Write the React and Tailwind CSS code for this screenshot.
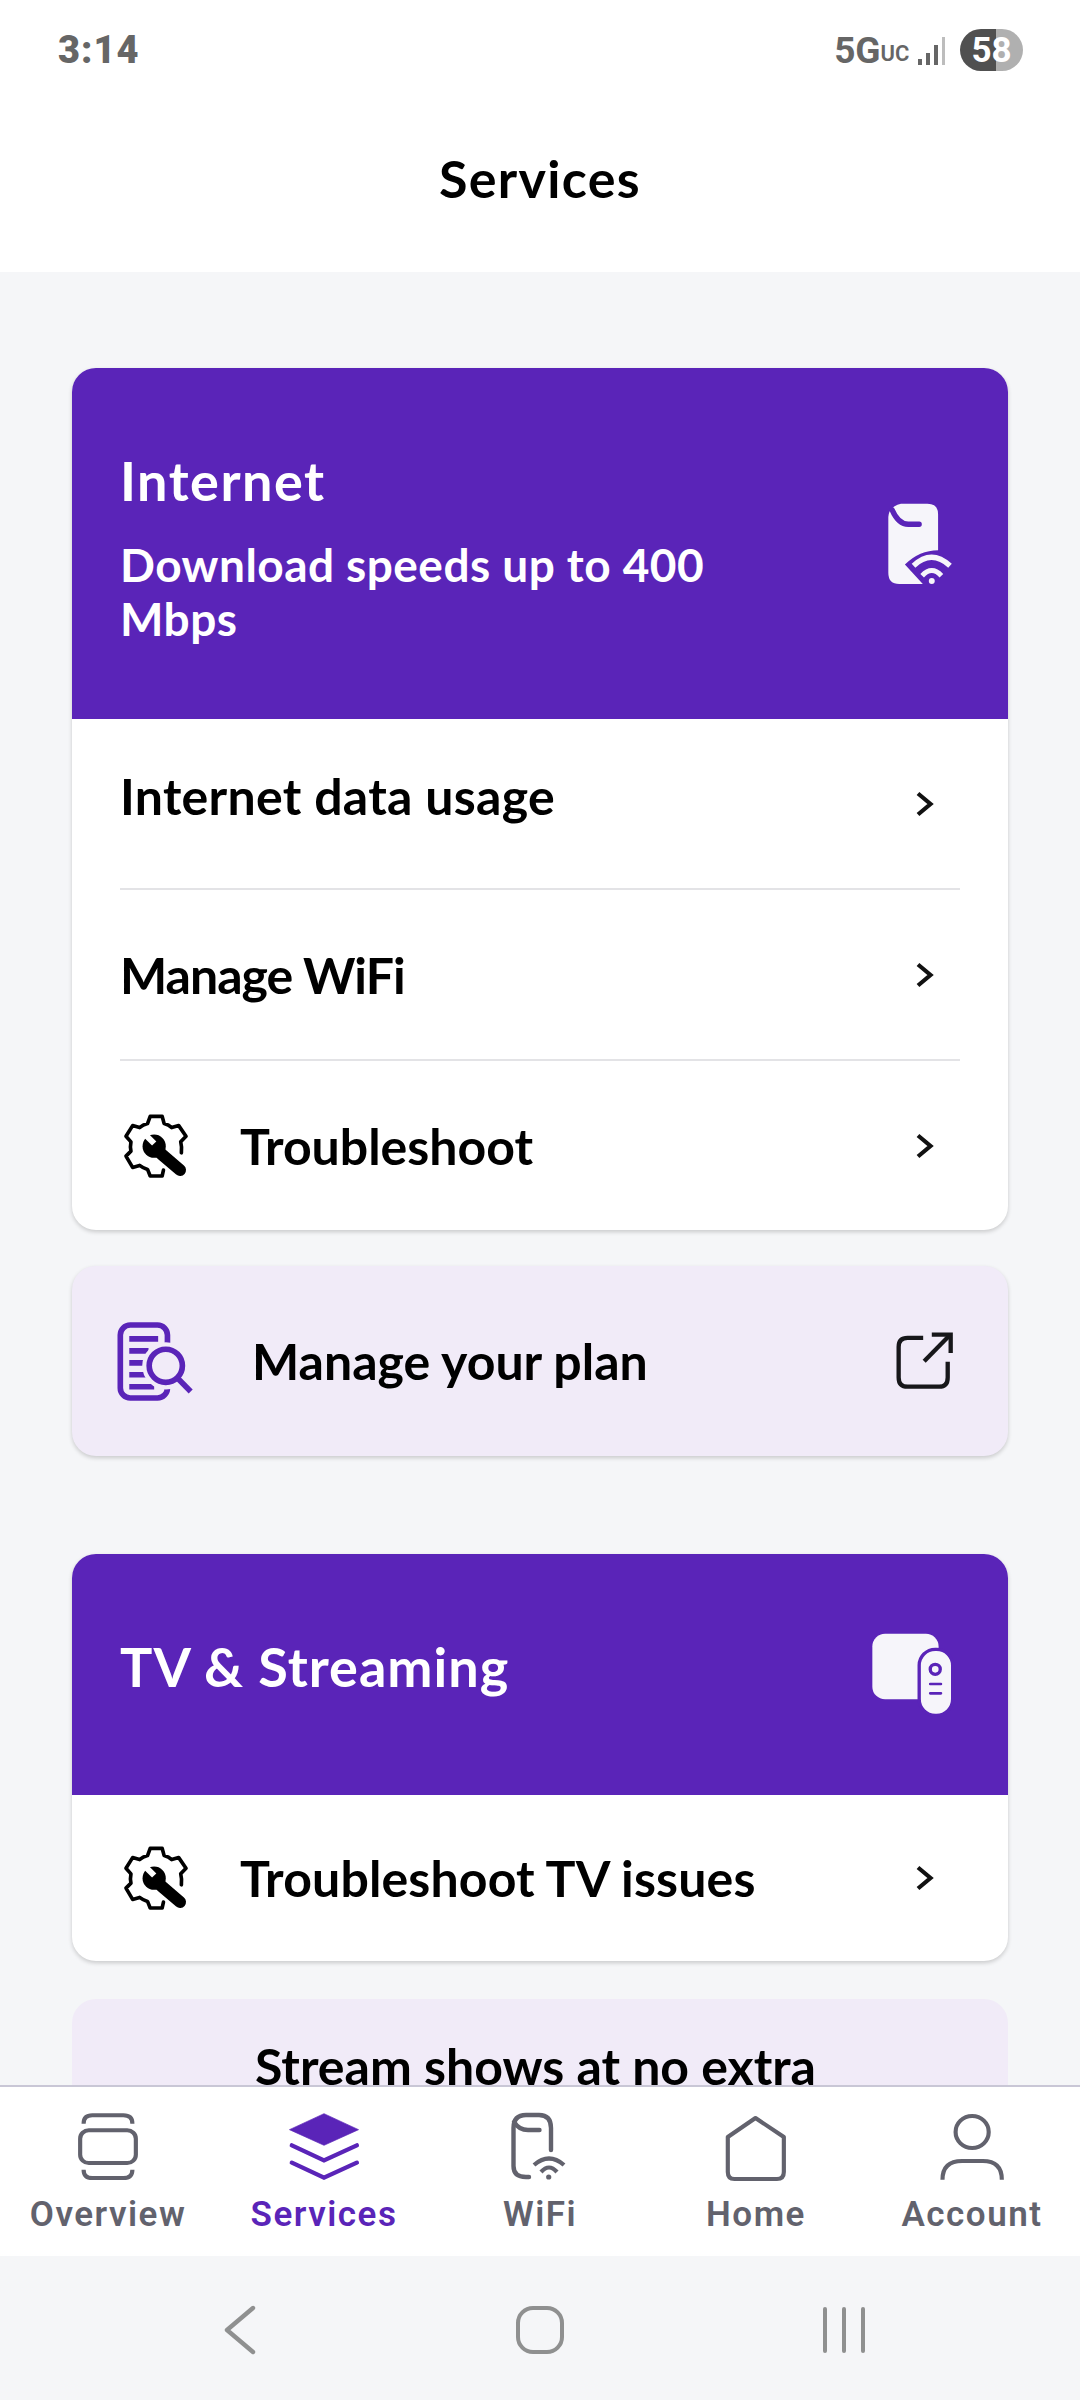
const purple = "#5a24b8";
const navGray = "#62626d";

function Svg({ vb, w, h, children, className = "" }) {
  return (
    <svg viewBox={vb} width={w} height={h} preserveAspectRatio="none" fill="none" className={`block shrink-0 ${className}`}>
      {children}
    </svg>
  );
}

function Chevron() {
  return (
    <svg viewBox="0 0 20 26" width="20" height="26" fill="none" className="block shrink-0">
      <path d="M3 2.5 L15.5 13 L3 23.5" stroke="#111" strokeWidth="4.2" strokeLinecap="butt" strokeLinejoin="miter" />
    </svg>
  );
}

function GearWrench() {
  return (
    <Svg vb="95 65 205 205" w={68} h={68} className="ml-[2px]">
      <path
        d="M274 188 Q276 170 272 155 L288 138 L266 106 L245 112 Q236 104 222 100 L216 78 H180 L172 100 Q158 104 148 112 L127 106 L107 138 L122 155 Q119 170 122 183 L107 198 L127 232 L148 226 Q158 234 172 238 L180 258 H216 L220 240"
        stroke="#000" strokeWidth="11" strokeLinejoin="round" strokeLinecap="round"
      />
      <circle cx="192" cy="168" r="35" fill="#000" />
      <path d="M214 192 L270 240" stroke="#000" strokeWidth="36" strokeLinecap="round" />
      <path d="M162 130 L192 160" stroke="#fff" strokeWidth="18" />
    </Svg>
  );
}

function Row({ label, gear, h, divider, labelClass = "" }) {
  return (
    <div className={`${h} flex items-center ${divider ? "border-b-2 border-[#e3e3e6]" : ""}`}>
      {gear && (
        <div className="w-[120px] shrink-0">
          <GearWrench />
        </div>
      )}
      <span className={`flex-1 text-[50px] font-bold text-black leading-none ${labelClass}`}>{label}</span>
      <div className="mr-[25px]">
        <Chevron />
      </div>
    </div>
  );
}

export default function App() {
  return (
    <div
      className="w-[1080px] h-[2400px] flex flex-col overflow-hidden bg-[#f5f6f8]"
      style={{ fontFamily: '"Lato", "Noto Sans", sans-serif' }}
    >
      {/* status + title */}
      <header className="h-[272px] shrink-0 bg-white relative flex flex-col">
        <div className="h-[100px] pl-[58px] pr-[57px] pt-[29px] flex items-start justify-between" style={{ fontFamily: "Roboto, sans-serif" }}>
          <span className="text-[38px] font-black text-[#666] leading-[42px] tracking-[1px]">3:14</span>
          <div className="flex items-center h-[42px]">
            <span className="text-[37px] font-bold text-[#666] leading-none">5G</span>
            <span className="text-[22px] font-semibold text-[#666] leading-none self-end mb-[6px]">UC</span>
            <div className="ml-[9px] mr-[15px] flex items-end gap-[3.7px] h-[28px] self-end mb-[6px]">
              <i className="block w-[4px] h-[6px] bg-[#666]" />
              <i className="block w-[4px] h-[12px] bg-[#666]" />
              <i className="block w-[4px] h-[20px] bg-[#666]" />
              <i className="block w-[3.5px] h-[28px] bg-[#bdbdbd]" />
            </div>
            <div className="relative w-[63px] h-[42px] rounded-full overflow-hidden flex">
              <div className="w-[36px] bg-[#505050]" />
              <div className="flex-1 bg-[#b0b0b0]" />
              <span className="absolute inset-0 flex items-center justify-center text-[35px] font-bold text-white leading-none">58</span>
            </div>
          </div>
        </div>
        <h1 className="text-center text-[52px] font-bold text-black leading-none mt-[52px] tracking-[1.3px]">Services</h1>
      </header>

      {/* scrolled content */}
      <main className="flex-1 min-h-0 overflow-hidden px-[72px] pt-[96px]">
        <section className="rounded-[24px] overflow-hidden bg-white shadow-[0_2px_4px_rgba(0,0,0,0.18)]">
          <div className="h-[351px] pl-[48px] pr-[54px] flex items-center justify-between" style={{ backgroundColor: purple }}>
            <div className="w-[640px] text-white font-bold pt-[9px]">
              <div className="text-[54px] leading-[60px] mb-[27px] tracking-[1.5px]">Internet</div>
              <div className="text-[46px] leading-[54px] tracking-[0.45px]">Download speeds up to 400 Mbps</div>
            </div>
            <Svg vb="195 95 205 250" w={68} h={83}>
              <path d="M240 100 H320 Q352 100 352 132 V240 Q296 240 252 283 L306 342 H235 Q202 342 202 308 V140 Q204 108 240 100 Z" fill="#f6f5fa" />
              <path d="M213 118 Q232 162 262 162 H295" stroke={purple} strokeWidth="16" strokeLinecap="round" />
              <path d="M278 287 Q332 236 388 287" stroke="#f6f5fa" strokeWidth="16" />
              <path d="M304 317 Q333 286 362 317" stroke="#f6f5fa" strokeWidth="15" />
              <circle cx="333" cy="333" r="9" fill="#f6f5fa" />
            </Svg>
          </div>
          <div className="px-[48px]">
            <Row label="Internet data usage" h="h-[171px]" divider labelClass="tracking-[0.3px] pb-[16px]" />
            <Row label="Manage WiFi" h="h-[171px]" divider labelClass="tracking-[-1px]" />
            <Row label="Troubleshoot" gear h="h-[169px]" />
          </div>
        </section>

        <section className="mt-[36px] h-[190px] rounded-[24px] bg-[#f1ebf8] shadow-[0_2px_4px_rgba(0,0,0,0.18)] pl-[44px] pr-[54px] flex items-center">
          <div className="w-[136px] shrink-0">
            <Svg vb="80 60 235 250" w={78} h={83}>
              <rect x="93" y="75" width="142" height="220" rx="30" stroke={purple} strokeWidth="17" />
              <path d="M120 117 H207 M120 153 H178 M120 189 H178 M120 225 H178 M120 261 H195" stroke={purple} strokeWidth="17" />
              <circle cx="230" cy="198" r="50" fill="#f1ebf8" stroke="#f1ebf8" strokeWidth="42" />
              <circle cx="230" cy="198" r="50" stroke={purple} strokeWidth="17" />
              <path d="M268 238 L305 275" stroke={purple} strokeWidth="17" />
            </Svg>
          </div>
          <span className="flex-1 text-[50px] font-bold text-black leading-none">Manage your plan</span>
          <Svg vb="110 95 175 175" w={58} h={58}>
            <path d="M192 113 H145 Q118 113 118 140 V232 Q118 260 145 260 H240 Q266 260 266 232 V185" stroke="#17171a" strokeWidth="13" />
            <path d="M195 183 L272 105" stroke="#17171a" strokeWidth="13" />
            <path d="M218 103 H275 V158" stroke="#17171a" strokeWidth="13" />
          </Svg>
        </section>

        <section className="mt-[98px] rounded-[24px] overflow-hidden bg-white shadow-[0_2px_4px_rgba(0,0,0,0.18)]">
          <div className="h-[241px] pl-[48px] pr-[53px] flex items-center justify-between" style={{ backgroundColor: purple }}>
            <div className="text-[54px] leading-[60px] font-bold text-white -mt-[15px] tracking-[1px]">TV &amp; Streaming</div>
            <Svg vb="60 70 260 255" w={87} h={85} className="-mr-[2px]">
              <rect x="67" y="75" width="198" height="197" rx="38" fill="#f6f5fa" />
              <rect x="207" y="122" width="100" height="198" rx="48" fill="#f6f5fa" stroke={purple} strokeWidth="10" />
              <circle cx="255" cy="182" r="15" stroke={purple} strokeWidth="10" />
              <path d="M240 226 H272 M240 254 H272" stroke={purple} strokeWidth="8" strokeLinecap="round" />
            </Svg>
          </div>
          <div className="px-[48px]">
            <Row label="Troubleshoot TV issues" gear h="h-[166px]" labelClass="tracking-[0.15px]" />
          </div>
        </section>

        <section className="mt-[38px] h-[200px] rounded-[24px] bg-[#f1ebf8] pt-[42px] pr-[9px] text-center">
          <span className="text-[50px] font-bold text-black leading-none">Stream shows at no extra</span>
        </section>
      </main>

      {/* bottom nav */}
      <nav
        className="h-[171px] shrink-0 bg-white border-t-[2px] border-[#c9c7d6] grid grid-cols-5 pt-[25px]"
        style={{ fontFamily: "Roboto, sans-serif" }}
      >
        <NavItem label="Overview">
          <Svg vb="225 125 185 210" w={64} h={70}>
            <rect x="237" y="180" width="161" height="98" rx="25" stroke={navGray} strokeWidth="12" />
            <path d="M247 160 Q247 135 272 135 H362 Q388 135 388 160" stroke={navGray} strokeWidth="12" />
            <path d="M247 298 Q247 323 272 323 H362 Q388 323 388 298" stroke={navGray} strokeWidth="12" />
          </Svg>
        </NavItem>
        <NavItem label="Services" active>
          <Svg vb="830 125 220 210" w={76} h={70}>
            <path d="M940 130 L1040 178 L940 225 L840 178 Z" fill={purple} strokeLinejoin="round" stroke={purple} strokeWidth="2" />
            <path d="M847 225 L940 270 L1035 225" stroke={purple} strokeWidth="13" strokeLinecap="round" />
            <path d="M847 277 L940 322 L1035 277" stroke={purple} strokeWidth="13" strokeLinecap="round" />
          </Svg>
        </NavItem>
        <NavItem label="WiFi">
          <Svg vb="510 2112 64 70" w={64} h={70}>
            <path d="M553 2150 V2128 Q553 2115 541 2115 H528 Q515.5 2115 515.5 2128 V2166 Q515.5 2177 528 2177 H531" stroke={navGray} strokeWidth="4.4" strokeLinecap="round" />
            <path d="M516 2122 Q521 2130 530 2130 H541.5" stroke={navGray} strokeWidth="4.4" strokeLinecap="round" />
            <path d="M536 2165 Q551 2152 566 2165" stroke={navGray} strokeWidth="4.2" />
            <path d="M543 2172 Q551 2163 559 2172" stroke={navGray} strokeWidth="4.2" />
            <circle cx="550.7" cy="2177" r="2.6" fill={navGray} />
          </Svg>
        </NavItem>
        <NavItem label="Home">
          <Svg vb="535 125 185 210" w={64} h={70}>
            <path d="M626 143 L708 200 V305 Q708 326 688 326 H565 Q546 326 546 305 V200 Z" stroke={navGray} strokeWidth="12" strokeLinejoin="round" />
          </Svg>
        </NavItem>
        <NavItem label="Account">
          <Svg vb="1155 125 200 210" w={69} h={70}>
            <circle cx="1254" cy="185" r="48" stroke={navGray} strokeWidth="12" />
            <path d="M1168 328 Q1168 272 1225 272 H1285 Q1340 272 1340 328" stroke={navGray} strokeWidth="12" />
          </Svg>
        </NavItem>
      </nav>

      {/* system bar */}
      <div className="h-[144px] shrink-0 bg-[#f5f6f8] grid grid-cols-3 items-center px-[180px] pt-[3px]">
        <div className="flex justify-start pl-[44px]">
          <svg viewBox="0 0 32 50" width="32" height="50" fill="none" className="block">
            <path d="M29 3 L3 25 L29 47" stroke="#8f9090" strokeWidth="4.4" strokeLinecap="round" strokeLinejoin="round" />
          </svg>
        </div>
        <div className="flex justify-center">
          <div className="w-[48px] h-[48px] rounded-[17px] border-[4px] border-[#8f9090]" />
        </div>
        <div className="flex justify-end pr-[35px] gap-[15px]">
          <i className="block w-[4px] h-[46px] rounded-full bg-[#8f9090]" />
          <i className="block w-[4px] h-[46px] rounded-full bg-[#8f9090]" />
          <i className="block w-[4px] h-[46px] rounded-full bg-[#8f9090]" />
        </div>
      </div>
    </div>
  );
}

function NavItem({ label, active, children }) {
  return (
    <div className="flex flex-col items-center">
      {children}
      <span className={`mt-[13px] text-[35px] font-semibold leading-[40px] tracking-[1.5px] ${active ? "text-[#5a24b8]" : "text-[#62626d]"}`}>
        {label}
      </span>
    </div>
  );
}
